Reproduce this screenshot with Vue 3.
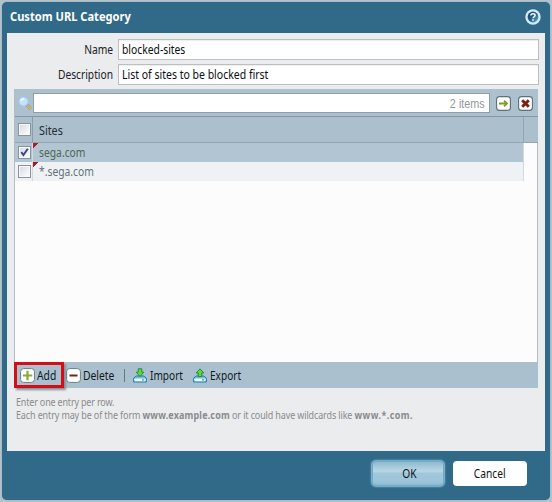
<script setup>
import { ref } from 'vue'
const name = ref('blocked-sites')
const description = ref('List of sites to be blocked first')
const sites = ref([
  { url: 'sega.com', checked: true },
  { url: '*.sega.com', checked: false },
])
</script>

<template>
  <div class="page">
    <section class="dialog">
      <header class="titlebar">
        <h1>Custom URL Category</h1>
        <svg class="help" viewBox="0 0 16 16">
          <defs>
            <linearGradient id="hg" x1="0" y1="0" x2="1" y2="1">
              <stop offset="0" stop-color="#173c6b" /><stop offset=".5" stop-color="#24608f" /><stop offset="1" stop-color="#62b5d8" />
            </linearGradient>
          </defs>
          <circle cx="8" cy="8" r="7.7" fill="#d3ebf7" />
          <circle cx="8" cy="8" r="5.4" fill="url(#hg)" />
          <path d="M5.9 6.4C5.9 4.3 10.1 4.3 10.1 6.5C10.1 7.9 8 7.7 8 9.2M8 10.3V11.8" fill="none" stroke="#fff" stroke-width="1.5" />
        </svg>
      </header>

      <main class="content">
        <div class="field"><label>Name</label><div class="input"><span class="narrow">{{ name }}</span></div></div>
        <div class="field"><label>Description</label><div class="input"><span class="narrow v-desc">{{ description }}</span></div></div>

        <div class="grid">
          <div class="search">
            <svg class="lens" viewBox="0 0 16 16">
              <path d="M10 10L13 13" stroke="#7d8793" stroke-width="3" stroke-linecap="round" />
              <path d="M11 11L13.2 13.2" stroke="#d6b45d" stroke-width="2.4" stroke-linecap="round" />
              <circle cx="6.5" cy="6.5" r="4.7" fill="#c5e2fb" stroke="#a2c6eb" stroke-width="1.2" />
              <path d="M3.9 6.3Q4.5 3.8 7.2 3.8" fill="none" stroke="#f3faff" stroke-width="1.5" />
            </svg>
            <div class="query"><span>2 items</span></div>
            <svg class="tool" viewBox="0 0 15 15">
              <rect x=".6" y=".6" width="13.8" height="13.8" rx="3" fill="#fff" stroke="#58717e" stroke-width="1.1" />
              <path d="M3 7.5H11M8 4.6L11 7.5L8 10.4" fill="none" stroke="#849b25" stroke-width="1.8" />
            </svg>
            <svg class="tool close" viewBox="0 0 15 15">
              <rect x=".6" y=".6" width="13.8" height="13.8" rx="3" fill="#fff" stroke="#58717e" stroke-width="1.1" />
              <path d="M4.2 4.3L10.8 10.7M10.8 4.3L4.2 10.7" stroke="#7a2114" stroke-width="2.9" />
            </svg>
          </div>
          <div class="row head">
            <div class="pick"><i class="box"></i></div>
            <div class="cell"><span class="narrow">Sites</span></div>
          </div>
          <div class="rows">
            <div v-for="site in sites" :key="site.url" class="row" :class="{ selected: site.checked }">
              <div class="pick">
                <i class="box">
                  <svg v-if="site.checked" viewBox="0 0 11 11"><path d="M2.3 5L4.4 8L8.8 1.7" fill="none" stroke="#39498a" stroke-width="2" /></svg>
                </i>
              </div>
              <div class="cell dirty"><span class="narrow">{{ site.url }}</span></div>
            </div>
          </div>
          <div class="actions">
            <div class="action add">
              <svg class="tool" viewBox="0 0 15 15">
                <rect x=".6" y=".6" width="13.8" height="13.8" rx="3" fill="#fff" stroke="#6b7d84" />
                <path d="M7.5 2.8V12.2M2.8 7.5H12.2" stroke="#8ba83a" stroke-width="2.2" />
              </svg><span class="narrow">Add</span>
            </div>
            <div class="action del">
              <svg class="tool" viewBox="0 0 15 15">
                <rect x=".6" y=".6" width="13.8" height="13.8" rx="3" fill="#fff" stroke="#6b7d84" />
                <path d="M3.5 7.5H11.5" stroke="#672719" stroke-width="2" />
              </svg><span class="narrow">Delete</span>
            </div>
            <i class="sep"></i>
            <div v-for="kind in ['Import', 'Export']" :key="kind" class="action transfer">
              <svg class="disk" viewBox="0 0 14 15">
                <path d="M3.2 8H10.8L13.4 10.2V14H.6V10.2Z" fill="#6ebce0" stroke="#267fae" />
                <rect x="1.4" y="10.4" width="11.2" height="2.9" rx=".8" fill="#eefaff" />
                <path d="M9 11.9H11.2" stroke="#2679a4" />
                <path v-if="kind === 'Import'" d="M5.2 .8H8.8V4.2H10.8L7 8.5L3.2 4.2H5.2Z" fill="#62d545" stroke="#269129" />
                <path v-else d="M5.2 8.5H8.8V5H10.8L7 .8L3.2 5H5.2Z" fill="#62d545" stroke="#269129" />
              </svg><span class="narrow">{{ kind }}</span>
            </div>
          </div>
        </div>

        <div class="hint">
          <p class="intro">Enter one entry per row.</p>
          <p><span class="lead">Each entry may be of the form </span><b class="example">www.example.com</b><span class="middle"> or it could have wildcards like </span><b class="wildcard">www.*.com.</b></p>
        </div>
      </main>

      <footer class="footer">
        <button class="ok"><span>OK</span></button>
        <button class="cancel"><span>Cancel</span></button>
      </footer>
    </section>
  </div>
</template>

<style>
body { margin: 0; overflow: hidden; }
</style>
<style scoped>
* { box-sizing: border-box; }
.page { width: 552px; height: 502px; padding: 2px; background: #b3c3cd; font: 12px "Noto Sans", "Open Sans", sans-serif; color: #202226; white-space: nowrap; }
.dialog { width: 548px; height: 498px; display: flex; flex-direction: column; padding: 0 5px; border-radius: 5px; background: #306a88; box-shadow: 0 0 1px #526f80; }
.titlebar { height: 31px; flex: none; display: flex; align-items: center; justify-content: space-between; padding: 0 4px 2px 3px; }
h1 { margin: 0; color: #fff; font-size: 12px; line-height: 16px; font-weight: 700; transform: scaleX(.927); transform-origin: 0 50%; }
.help { width: 16px; height: 16px; }
.content { height: 418px; flex: none; background: #ebecee; padding: 6px 6px 0 7px; }
.narrow { display: inline-block; transform: scaleX(.86); transform-origin: 0 50%; }
.field { display: flex; height: 21px; margin-bottom: 4px; align-items: center; }
.field label { width: 99px; text-align: right; margin-right: 5px; line-height: 20px; transform: scaleX(.853); transform-origin: 100% 50%; }
.input { width: 421px; height: 21px; border: 1px solid #bcbfc1; background: #fff; padding-left: 3px; line-height: 20px; box-shadow: inset 0 1px 1px #eee; color: #0d0f13; }
.v-desc { transform: scaleX(.875); }
.grid { width: 524px; height: 299px; border-left: 1px solid #b1bcc3; border-right: 1px solid #b1bcc3; background: #fcfcfc; display: flex; flex-direction: column; }
.search { height: 28px; flex: none; background: #acc0ce; border-bottom: 1px solid #8496a3; display: flex; align-items: center; padding: 1px 0 0 2px; margin-right: -1px; }
.lens { width: 16px; height: 16px; }
.query { width: 457px; height: 20px; border: 1px solid #8e9da6; background: #fff; text-align: right; padding-right: 4px; color: #92969a; font: 12px/21px "Liberation Sans", sans-serif; }
.query span { display: inline-block; transform: scaleX(.9); transform-origin: 100% 50%; }
.tool { width: 15px; height: 15px; flex: none; }
.search .tool { margin-left: 6px; }
.search .close { margin-left: 7px; }
.row { display: flex; width: 509px; height: 19px; background: #eff2f4; border-right: 1px solid #d3dade; color: #65727b; }
.head { width: auto; margin-right: -1px; height: 26px; flex: none; background: #abbfcc; border-bottom: 1px solid #91a5b2; border-right: 0; color: #252e34; background-image: linear-gradient(90deg, transparent 508px, #91a5b2 508px, #91a5b2 509px, transparent 509px); }
.rows { flex: 1; }
.pick { width: 18px; flex: none; display: flex; align-items: center; justify-content: center; padding-left: 2px; border-right: 1px solid #d3dade; }
.head .pick { border-right-color: #899dab; padding-bottom: 1px; }
.selected { background: #b2c5d3; color: #506755; }
.box { display: block; width: 13px; height: 13px; border: 1px solid #87949b; background: linear-gradient(135deg, #d5dade, #fff); box-shadow: inset 0 0 0 1px #f8f8f8; }
.box svg { display: block; width: 11px; height: 11px; }
.cell { display: flex; align-items: center; padding: 0 0 0 6px; }
.head .cell { padding-top: 1px; }
.head .narrow { transform: scaleX(.9); }
.dirty { background: linear-gradient(135deg, #ac1d22 4px, transparent 4px) no-repeat 0 0 / 7px 7px; }
.actions { height: 26px; flex: none; display: flex; align-items: center; background: #abc0ce; margin: 0 -1px; color: #11191f; }
.action { display: flex; align-items: center; }
.action svg { flex: none; }
.add { width: 50px; height: 26px; border: 3px solid #d20f17; padding-left: 3px; gap: 2px; box-shadow: 2px 2px 2px #80919b; z-index: 1; position: relative; }
.del { margin-left: 2px; gap: 2px; width: 58px; }
.sep { width: 1px; height: 13px; background: #647884; margin: 0 8px 0 0; }
.disk { width: 14px; height: 15px; }
.transfer { gap: 3px; width: 60px; }
.transfer .narrow { transform: scaleX(.84); }
.hint { padding: 8px 0 0 2px; color: #898b8d; font-size: 10px; }
.hint p { margin: 0; height: 13px; line-height: 13px; white-space: pre; transform: scaleX(.896); transform-origin: 0 50%; }
.intro { letter-spacing: -.18px; }
.lead { letter-spacing: -.12px; }
.example { letter-spacing: .19px; }
.middle { letter-spacing: -.13px; }
.wildcard { letter-spacing: .5px; }
.footer { flex: 1; display: flex; align-items: flex-start; padding: 9px 0 0 364px; }
button { border: 0; padding: 0; font: 12px/25px "Noto Sans", "Open Sans", sans-serif; color: #0d141a; width: 74px; }
button span { display: inline-block; transform: scaleX(.85); }
.ok { height: 27px; border-radius: 5px; border: 2px solid #74abc7; margin-right: 8px; background: linear-gradient(#8dbbd1, #b9d7e5 40%, #a0c7da 50%, #9dc5d9 85%, #8bbad1); box-shadow: 0 0 2px #82b4ca; line-height: 23px; padding-left: 2px; }
.cancel { height: 25px; margin-top: 1px; border-radius: 4px; background: #fff; }
</style>
